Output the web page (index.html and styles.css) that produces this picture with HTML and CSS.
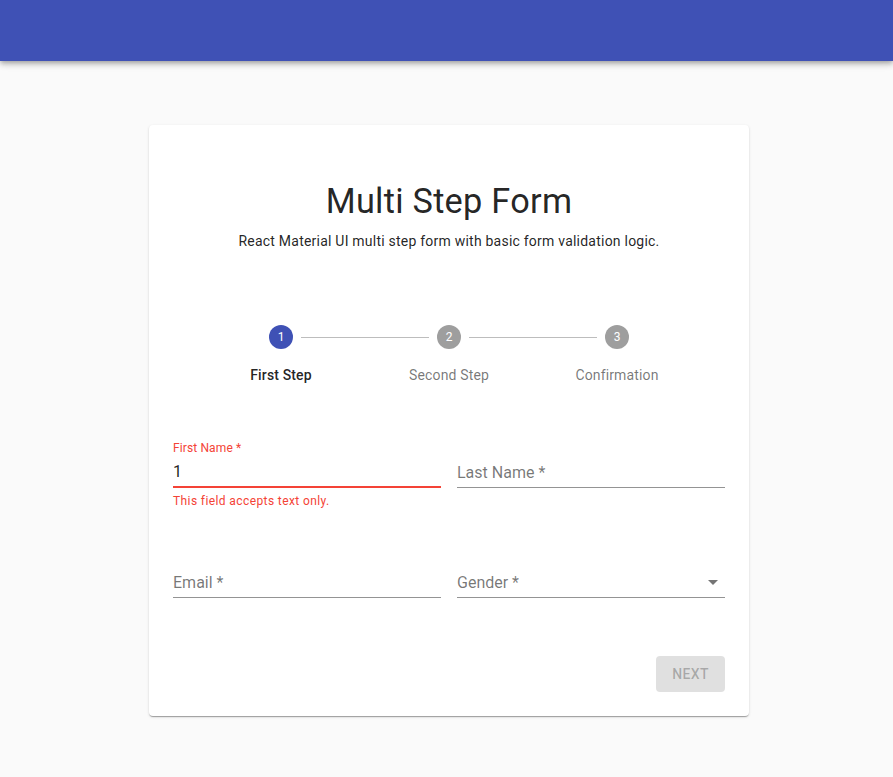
FILE: index.html
```html
<!DOCTYPE html>
<html lang="en">
<head>
<meta charset="utf-8">
<title>Multi Step Form</title>
<link rel="stylesheet" href="styles.css">
</head>
<body>
<header class="appbar"></header>
<main class="page">
  <section class="card">
    <h1 class="title">Multi Step Form</h1>
    <p class="subtitle">React Material UI multi step form with basic form validation logic.</p>

    <div class="stepper">
      <div class="step-icons">
        <span class="step-icon active">1</span>
        <span class="connector"></span>
        <span class="step-icon">2</span>
        <span class="connector"></span>
        <span class="step-icon">3</span>
      </div>
      <div class="step-labels">
        <span class="step-label active">First Step</span>
        <span class="step-label">Second Step</span>
        <span class="step-label">Confirmation</span>
      </div>
    </div>

    <form class="form">
      <div class="field error">
        <div class="field-label">First Name *</div>
        <div class="field-input">1</div>
        <div class="helper">This field accepts text only.</div>
      </div>
      <div class="field">
        <div class="field-label"></div>
        <div class="field-input placeholder">Last Name *</div>
      </div>
      <div class="field">
        <div class="field-label"></div>
        <div class="field-input placeholder">Email *</div>
      </div>
      <div class="field">
        <div class="field-label"></div>
        <div class="field-input placeholder select">
          <span>Gender *</span>
          <svg class="arrow" viewBox="0 0 24 24" width="24" height="24"><path d="M7 10l5 5 5-5z"/></svg>
        </div>
      </div>
    </form>

    <div class="actions">
      <button class="btn" type="button" disabled>Next</button>
    </div>
  </section>
</main>
</body>
</html>
```

FILE: styles.css
```css
* { box-sizing: border-box; }

html, body {
  margin: 0;
  padding: 0;
}

body {
  background: #fafafa;
  font-family: Roboto, "Liberation Sans", Arial, sans-serif;
  color: rgba(0, 0, 0, 0.87);
  min-height: 777px;
}

.appbar {
  height: 61px;
  background: #3f51b5;
  box-shadow: 0px 2px 4px -1px rgba(0,0,0,0.2), 0px 4px 5px 0px rgba(0,0,0,0.14), 0px 1px 10px 0px rgba(0,0,0,0.12);
  position: relative;
  z-index: 1;
}

.page {
  padding-top: 64px;
  padding-left: 5px;
}

.card {
  width: 600px;
  margin: 0 auto;
  background: #fff;
  border-radius: 4px;
  box-shadow: 0px 2px 1px -1px rgba(0,0,0,0.2), 0px 1px 1px 0px rgba(0,0,0,0.14), 0px 1px 3px 0px rgba(0,0,0,0.12);
  padding: 24px;
  display: flex;
  flex-direction: column;
}

.title {
  margin: 31px 0 0;
  font-size: 34.3px;
  font-weight: 400;
  line-height: 42px;
  text-align: center;
  letter-spacing: 0.00735em;
  color: rgba(0, 0, 0, 0.87);
}

.subtitle {
  margin: 9px 0 0;
  font-size: 14px;
  line-height: 20px;
  font-weight: 400;
  text-align: center;
  letter-spacing: 0.016em;
  color: rgba(0, 0, 0, 0.87);
}

.stepper {
  margin-top: 50px;
  padding: 24px;
  display: flex;
  flex-direction: column;
}

.step-icons {
  display: flex;
  align-items: center;
  padding: 0 72px;
  height: 24px;
}

.step-icon {
  width: 24px;
  height: 24px;
  border-radius: 50%;
  background: #9e9e9e;
  color: #fff;
  font-size: 12px;
  line-height: 24px;
  text-align: center;
  flex: none;
}

.step-icon.active {
  background: #3f51b5;
}

.connector {
  flex: 1;
  margin: 0 8px;
  border-top: 1px solid #bdbdbd;
  height: 0;
}

.step-labels {
  display: grid;
  grid-template-columns: 1fr 1fr 1fr;
  margin-top: 16px;
}

.step-label {
  text-align: center;
  font-size: 14px;
  line-height: 20px;
  color: rgba(0, 0, 0, 0.54);
  letter-spacing: 0.01071em;
}

.step-label.active {
  color: rgba(0, 0, 0, 0.87);
  font-weight: 500;
}

.form {
  margin-top: 31px;
  display: grid;
  grid-template-columns: 1fr 1fr;
  column-gap: 16px;
  row-gap: 39px;
  align-items: start;
}

.field {
  display: flex;
  flex-direction: column;
}

.field-label {
  height: 16px;
  padding-top: 2px;
  font-size: 12px;
  line-height: 12px;
  letter-spacing: 0.01em;
  color: rgba(0, 0, 0, 0.54);
}

.field-input {
  height: 32px;
  padding: 6px 0 6px;
  font-size: 16px;
  line-height: 19px;
  color: rgba(0, 0, 0, 0.87);
  border-bottom: 1px solid rgba(0, 0, 0, 0.42);
}

.field-input.placeholder {
  color: rgba(0, 0, 0, 0.54);
  padding-top: 7px;
}

.field-input.select {
  display: flex;
  justify-content: space-between;
  align-items: center;
  padding-top: 1px;
  padding-bottom: 0;
}

.arrow {
  fill: rgba(0, 0, 0, 0.54);
  flex: none;
}

.field.error .field-label {
  color: #f44336;
}

.field.error .field-input {
  border-bottom: 2px solid #f44336;
  padding-bottom: 5px;
}

.helper {
  margin-top: 3px;
  font-size: 12px;
  line-height: 20px;
  color: #f44336;
  letter-spacing: 0.03333em;
}

.actions {
  margin-top: 58px;
  display: flex;
  justify-content: flex-end;
}

.btn {
  height: 36px;
  padding: 6px 16px;
  border: 0;
  border-radius: 4px;
  background: rgba(0, 0, 0, 0.12);
  color: rgba(0, 0, 0, 0.26);
  font-family: Roboto, "Liberation Sans", Arial, sans-serif;
  font-size: 14px;
  font-weight: 500;
  letter-spacing: 0.02857em;
  text-transform: uppercase;
  line-height: 24px;
}
```
